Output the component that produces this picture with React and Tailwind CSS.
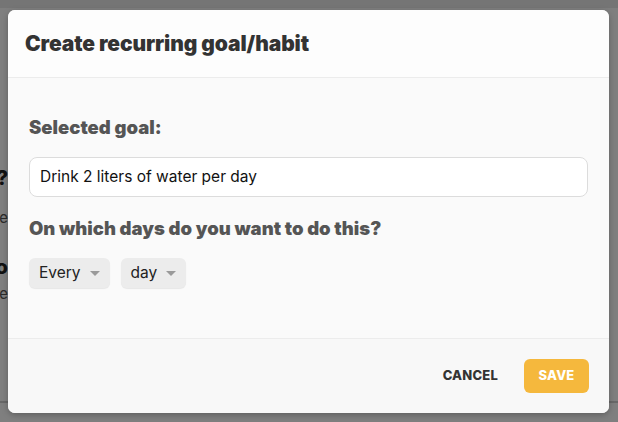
import React from 'react';

const Caret = () => (
  <svg width="10" height="6" viewBox="0 0 10 6" className="ml-[9px] mt-[1px]">
    <path d="M0 0 L10 0 L5 5 Z" fill="#9a9a9a" />
  </svg>
);

const SelectBox = ({ value }) => (
  <div className="h-[30px] px-[10px] flex items-center rounded-[6px] bg-[#ececec] shadow-[0_1px_1px_rgba(0,0,0,0.08)] text-[15.5px] text-[#222]">
    {value}
    <Caret />
  </div>
);

export default function App() {
  return (
    <div className="relative w-[618px] h-[422px] overflow-hidden bg-white" style={{ fontFamily: 'Inter, "Noto Sans", sans-serif' }}>
      {/* page behind the overlay */}
      <div className="h-full border-t-[8px] border-[#eaeaea]">
        <div className="w-[8px] overflow-hidden flex flex-col items-end pt-[152px]">
          <div className="whitespace-nowrap text-[20px] font-extrabold text-[#222] leading-[36px]">What?</div>
          <div className="whitespace-nowrap text-[15px] text-[#555] leading-[24px] mt-[10px]">Some</div>
          <div className="whitespace-nowrap text-[20px] font-extrabold text-[#222] leading-[36px] mt-[19px]">What to</div>
          <div className="whitespace-nowrap text-[15px] text-[#555] leading-[24px] mt-[-3px]">Some</div>
        </div>
      </div>
      <div className="absolute left-0 right-0 top-[401px] h-[2px] bg-[#d0d0d0]" />

      {/* overlay */}
      <div className="absolute inset-0 bg-black/50" />

      {/* modal */}
      <div className="absolute left-[8px] top-[10px] w-[601px] h-[403px] rounded-[7px] overflow-hidden bg-[#fafafa] shadow-[0_2px_6px_rgba(0,0,0,0.25)] flex flex-col">
        <div className="h-[68px] bg-[#fdfdfd] border-b border-[#ececec] flex items-center px-[17px]">
          <h1 className="text-[21px] font-black text-[#333] tracking-[-0.1px]">Create recurring goal/habit</h1>
        </div>
        <div className="flex-1 px-[21px] pt-[38px]">
          <div className="text-[18.5px] font-black text-[#555] leading-[22px]">Selected goal:</div>
          <div className="mt-[19px] h-[40px] rounded-[8px] border border-[#dcdcdc] bg-white flex items-center px-[10px] text-[15.5px] text-[#111]">
            Drink 2 liters of water per day
          </div>
          <div className="mt-[20px] text-[18.5px] font-black text-[#555] leading-[22px]">On which days do you want to do this?</div>
          <div className="mt-[19px] flex gap-[11px]">
            <SelectBox value="Every" />
            <SelectBox value="day" />
          </div>
        </div>
        <div className="h-[75px] border-t border-[#ececec] bg-[#f8f8f8] flex items-center justify-end gap-[26px] px-[20px]">
          <button className="text-[13px] font-extrabold text-[#333] tracking-[0.2px]">CANCEL</button>
          <button className="h-[34px] w-[65px] rounded-[6px] bg-[#f5b83d] text-white text-[13px] font-extrabold tracking-[0.2px]">SAVE</button>
        </div>
      </div>
    </div>
  );
}
